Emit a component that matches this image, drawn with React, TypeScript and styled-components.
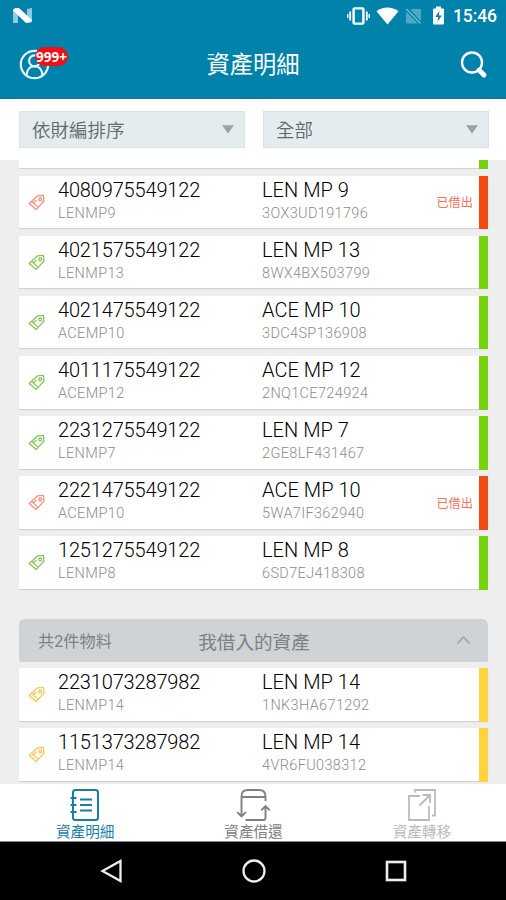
import React from "react";
import styled, { createGlobalStyle } from "styled-components";

const Global = createGlobalStyle`
  * { box-sizing: border-box; }
  body { margin: 0; font-family: Roboto, "Noto Sans CJK TC", sans-serif; }
  svg { display: block; flex: none; overflow: visible; }
`;

const Screen = styled.div`
  width: 506px;
  height: 900px;
  display: flex;
  flex-direction: column;
  overflow: hidden;
  background: #eee;
`;

const Header = styled.header`
  height: 99px;
  flex: none;
  background: #0082ab;
  border-bottom: 1px solid #16709a;
  color: #fff;
`;

const StatusBar = styled.div`
  height: 31px;
  display: flex;
  align-items: center;
  justify-content: space-between;
  padding: 0 9px 0 13px;
`;

const StatusIcons = styled.div`
  display: flex;
  align-items: center;
`;

const Clock = styled.span`
  width: 44px;
  margin-left: 8px;
  font-size: 17.5px;
  line-height: 20px;
  font-weight: 500;
  letter-spacing: -0.1px;
  white-space: nowrap;
`;

const TitleBar = styled.div`
  height: 67px;
  display: grid;
  grid-template-columns: 60px 1fr 60px;
  align-items: center;
`;

const Profile = styled.div`
  position: relative;
  padding-left: 19px;
`;

const Badge = styled.span`
  position: absolute;
  left: 35px;
  top: -2px;
  width: 33px;
  height: 19px;
  border-radius: 10px;
  background: #f30d14;
  font: 700 13.5px/20px "Open Sans", sans-serif;
  text-align: center;
`;

const Title = styled.h1`
  margin: 1px 0 0;
  font-size: 23.3px;
  line-height: 30px;
  font-weight: 400;
  text-align: center;
`;

const Filters = styled.div`
  height: 61px;
  flex: none;
  display: flex;
  gap: 18px;
  padding: 12px 17px 0 19px;
  background: #fff;
`;

const Select = styled.div`
  flex: 1;
  height: 37px;
  display: flex;
  align-items: center;
  justify-content: space-between;
  padding: 0 10px 2px 12px;
  background: #e5ecee;
  border: 1px solid #d9e3e5;
  color: #626a6b;
  font-size: 18.5px;
  font-weight: 350;
`;

const List = styled.main`
  height: 624px;
  flex: none;
  overflow: hidden;
  padding: 0 18px 0 19px;
`;

const CutCard = styled.div`
  height: 9px;
  margin-bottom: 6.6px;
  background: #fff;
  border-bottom: 1.5px solid #d4d4d4;
  display: flex;
  justify-content: flex-end;
`;

const Card = styled.article`
  height: 52.5px;
  margin-bottom: 7.65px;
  display: grid;
  grid-template-columns: 39px 204px 1fr auto 9px;
  background: #fff;
  box-shadow: 0 1px 1px #d2d2d2;
`;

const TagCell = styled.div`
  padding: 18px 0 0 9px;
`;

const Stack = styled.div`
  padding-top: 3px;
  white-space: nowrap;
`;

const Primary = styled.div<{ $code?: boolean }>`
  font-size: 20px;
  line-height: 23px;
  letter-spacing: ${(p) => (p.$code ? "-0.16px" : "0.05px")};
  color: #000;
  font-weight: 350;
`;

const Secondary = styled.div`
  margin-top: 1px;
  font-size: 14.5px;
  line-height: 22px;
  letter-spacing: 0.35px;
  color: #8c8c8c;
  font-weight: 300;
`;

const Lent = styled.span`
  align-self: center;
  margin-right: 6px;
  font-size: 12.2px;
  color: #f4735b;
`;

const Stripe = styled.i<{ $color: string }>`
  width: 9px;
  margin-bottom: -1px;
  background: ${(p) => p.$color};
`;

const SectionHead = styled.div`
  height: 43px;
  margin: 29.9px 0 6.4px;
  display: grid;
  grid-template-columns: 141px 1fr 141px;
  align-items: center;
  padding: 0 18px 0 19px;
  border-radius: 6px 6px 2px 2px;
  background: #cfd3d6;
  color: #7c8183;
`;

const Count = styled.span`
  font-size: 16.2px;
`;

const SectionTitle = styled.span`
  font-size: 18.6px;
  text-align: center;
  white-space: nowrap;
`;

const Chevron = styled.svg`
  justify-self: end;
`;

const Tabs = styled.nav`
  height: 58px;
  flex: none;
  display: grid;
  grid-template-columns: repeat(3, 1fr);
  padding: 3px 0 0 1px;
  background: #fff;
  border-bottom: 1px solid #888;
`;

const Tab = styled.div<{ $color: string }>`
  display: flex;
  flex-direction: column;
  align-items: center;
  color: ${(p) => p.$color};
  font-size: 14.6px;
  line-height: 18px;
`;

const NavBar = styled.footer`
  height: 58px;
  flex: none;
  display: grid;
  grid-template-columns: 142px 142px 142px;
  justify-content: center;
  align-items: center;
  justify-items: center;
  padding-left: 2px;
  background: #000;
`;

const ARROW_GREY = "#9da2a3";
const COLORS = {
  lent: { tag: "#f7907e", bar: "#f04b10" },
  free: { tag: "#86c65a", bar: "#75d20d" },
  mine: { tag: "#fac656", bar: "#fdd43b" },
};
type Kind = keyof typeof COLORS;

const Tag = ({ color }: { color: string }) => (
  <svg width="18" height="18" viewBox="0 0 18 18" fill="none" stroke={color} strokeWidth="1.3" strokeLinejoin="round">
    <path d="M1.2 9.4 9.6 1.8 15.4 1.4 16 7 8 15.6Z" />
    <path d="M3.6 7.3 10 13.4M5.8 8.4 8.3 6.1" />
    <circle cx="12.2" cy="5.4" r="1.4" />
  </svg>
);

const Caret = () => (
  <svg width="12" height="9" viewBox="0 0 12 9">
    <path d="M0 1.2h12L6 9.5Z" fill={ARROW_GREY} />
  </svg>
);

const Item = ({ kind, code, alias, name, serial }: { kind: Kind; code: string; alias: string; name: string; serial: string }) => (
  <Card>
    <TagCell><Tag color={COLORS[kind].tag} /></TagCell>
    <Stack>
      <Primary $code>{code}</Primary>
      <Secondary>{alias}</Secondary>
    </Stack>
    <Stack>
      <Primary>{name}</Primary>
      <Secondary>{serial}</Secondary>
    </Stack>
    <Lent>{kind === "lent" ? "已借出" : ""}</Lent>
    <Stripe $color={COLORS[kind].bar} />
  </Card>
);

const assets: [Kind, string, string, string, string][] = [
  ["lent", "4080975549122", "LENMP9", "LEN MP 9", "3OX3UD191796"],
  ["free", "4021575549122", "LENMP13", "LEN MP 13", "8WX4BX503799"],
  ["free", "4021475549122", "ACEMP10", "ACE MP 10", "3DC4SP136908"],
  ["free", "4011175549122", "ACEMP12", "ACE MP 12", "2NQ1CE724924"],
  ["free", "2231275549122", "LENMP7", "LEN MP 7", "2GE8LF431467"],
  ["lent", "2221475549122", "ACEMP10", "ACE MP 10", "5WA7IF362940"],
  ["free", "1251275549122", "LENMP8", "LEN MP 8", "6SD7EJ418308"],
];

const borrowed: [Kind, string, string, string, string][] = [
  ["mine", "2231073287982", "LENMP14", "LEN MP 14", "1NK3HA671292"],
  ["mine", "1151373287982", "LENMP14", "LEN MP 14", "4VR6FU038312"],
];

const renderItem = ([kind, code, alias, name, serial]: [Kind, string, string, string, string]) => (
  <Item key={code} kind={kind} code={code} alias={alias} name={name} serial={serial} />
);

export default function App() {
  return (
    <Screen>
      <Global />
      <Header>
        <StatusBar>
          <svg width="19" height="15" viewBox="0 0 19 15">
            <path d="M0 1.5 5 0v15H0ZM14 1l5-1v14.5l-5-1Z" fill="#8ecbe0" />
            <path d="M2 0h4l13 12-2 2.5-4 .5L0 2.5Z" fill="#fff" />
          </svg>
          <StatusIcons>
            <svg width="23" height="18" viewBox="0 0 23 18">
              <rect x="6.6" y="1.4" width="9.8" height="15.2" rx="1" fill="none" stroke="#fff" strokeWidth="2.4" />
              <path d="M3.2 4.5v9M19.8 4.5v9" stroke="#fff" strokeWidth="1.8" />
              <path d="M.8 7v4M22.2 7v4" stroke="#fff" strokeWidth="1.4" />
            </svg>
            <svg width="36" height="18" viewBox="0 0 36 18">
              <path d="M6.5 4.2C13-.6 21.5-.6 28.5 4.2L17.5 17.5Z" fill="#fff" />
            </svg>
            <svg width="15" height="16" viewBox="0 0 15 16">
              <path d="M0 3.5 12 15.5H0ZM4 1h11v13Z" fill="#4ca9c6" />
              <path d="M.5.5 15 15.5" stroke="#0082ab" strokeWidth="3" />
              <path d="M.5 1 14.5 15.5" stroke="#72bcd3" strokeWidth="1.3" />
            </svg>
            <svg width="24" height="19" viewBox="0 0 24 19">
              <path d="M15 .5h5v2h2q1 0 1 1v14q0 1-1 1h-9q-1 0-1-1v-14q0-1 1-1h2Z" fill="#fff" />
              <path d="M18.5 4.8 14.3 11h3l-.8 4.8 4.3-6.3h-3Z" fill="#0082ab" />
            </svg>
            <Clock>15:46</Clock>
          </StatusIcons>
        </StatusBar>
        <TitleBar>
          <Profile>
            <svg width="31" height="31" viewBox="0 0 31 31" fill="none" stroke="#e4f6fd" strokeWidth="2.2">
              <circle cx="15.5" cy="15.5" r="13.7" />
              <circle cx="15.5" cy="11.8" r="5.5" />
              <path d="M7.6 26.2c.3-6 3.6-9.1 7.9-9.1s7.6 3.1 7.9 9.1" />
            </svg>
            <Badge>999+</Badge>
          </Profile>
          <Title>資產明細</Title>
          <svg width="42" height="28" viewBox="0 0 42 28" fill="none" stroke="#fff">
            <circle cx="26" cy="11.5" r="10" strokeWidth="2.4" />
            <path d="m33 19 5 5" strokeWidth="4.8" strokeLinecap="round" />
          </svg>
        </TitleBar>
      </Header>
      <Filters>
        <Select>依財編排序<Caret /></Select>
        <Select>全部<Caret /></Select>
      </Filters>
      <List>
        <CutCard><Stripe $color={COLORS.free.bar} /></CutCard>
        {assets.map(renderItem)}
        <SectionHead>
          <Count>共2件物料</Count>
          <SectionTitle>我借入的資產</SectionTitle>
          <Chevron width="13" height="8" viewBox="0 0 13 8" fill="none" stroke="#9ba1a4" strokeWidth="1.5">
            <path d="M.5 7.5 6.5 1l6 6.5" />
          </Chevron>
        </SectionHead>
        {borrowed.map(renderItem)}
      </List>
      <Tabs>
        <Tab $color="#197da5">
          <svg width="30" height="36" viewBox="0 0 30 36" fill="none" stroke="currentColor" strokeWidth="2">
            <rect x="3" y="3" width="25" height="30" rx="2.5" />
            <path d="M.5 11h6M.5 18h6M.5 25h6M10 12.5h12M10 18h12M10 23.5h12" />
          </svg>
          資產明細
        </Tab>
        <Tab $color="#808080">
          <svg width="34" height="36" viewBox="0 0 34 36" fill="none" stroke="currentColor" strokeWidth="1.9">
            <path d="M5.5 29V9.5Q5.5 3 12 3h11q6.5 0 6.5 6.5V14M5.5 10h24M1.2 25.2l4.3 4.3 4.3-4.3M9.5 33h18q2 0 2-2V19.5M25.2 23.3l4.3-4.3 4.3 4.3" />
          </svg>
          資產借還
        </Tab>
        <Tab $color="#bbb">
          <svg width="30" height="36" viewBox="0 0 30 36" fill="none" stroke="currentColor" strokeWidth="1.8">
            <path d="M8 5.5V3h20v25.5h-3M13 9H2v24h20V19M12.5 18.5 23 8M15.5 8H23v8" />
          </svg>
          資產轉移
        </Tab>
      </Tabs>
      <NavBar>
        <svg width="22" height="24" viewBox="0 0 22 24" fill="none" stroke="#eee" strokeWidth="2.3">
          <path d="M1.5 12 19.5 2v20Z" />
        </svg>
        <svg width="24" height="24" viewBox="0 0 24 24" fill="none" stroke="#eee" strokeWidth="2.3">
          <circle cx="12" cy="12" r="10.5" />
        </svg>
        <svg width="22" height="22" viewBox="0 0 22 22" fill="none" stroke="#eee" strokeWidth="2.6">
          <rect x="2" y="2" width="18" height="18" />
        </svg>
      </NavBar>
    </Screen>
  );
}
